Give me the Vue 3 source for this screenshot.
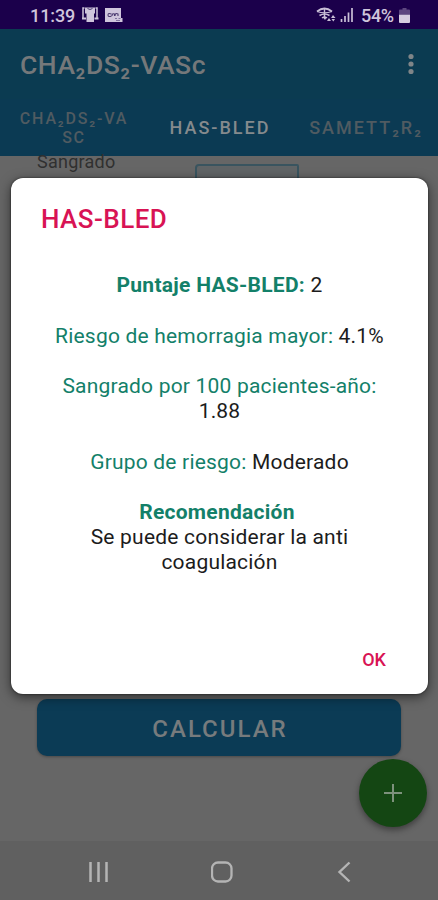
<script setup>
import {ref} from 'vue'

const title = 'CHA₂DS₂-VASc'
const tabs = [
  {id: 'chads', lines: ['CHA₂DS₂-VA', 'SC']},
  {id: 'hasbled', lines: ['HAS-BLED']},
  {id: 'samett', lines: ['SAMETT₂R₂']},
]
const activeTab = ref('hasbled')
const showDialog = ref(true)
</script>

<template>
  <div class='screen'>
    <header class='status'>
      <span class='clock'>11:39</span>
      <svg class='shirt' viewBox='0 0 18 16' width='18' height='16'>
        <path d='M3.500 1H2v10M14.500 1H16v10' fill='none' stroke='#cfc5dc' stroke-width='1.500' />
        <path d='M4 .5h10v6h-1V15H5.500V6.500H4z' fill='#cfc5dc' />
        <path d='M6.500 1.500q2.500 2 5 0' fill='none' stroke='#4b3a70' />
        <path d='M1 11.500h4M13.500 11.500h4' stroke='#cfc5dc' stroke-width='1.800' />
      </svg>
      <svg class='keyboard' viewBox='0 0 19 15' width='19' height='15'>
        <path d='M1 0h16v10h1.500v4H1z' fill='#cfc5dc' />
        <path d='M7.500 6Q4 4.500 4 7t3.500 1M8 8q0-3 2.500-2v2M11 8q0-3.500 3-2v2' fill='none' stroke='#4b3a70' stroke-width='1.100' />
        <path d='M11 10.500h2M14.500 10.500h2M12 12.500h4' stroke='#8275a0' />
      </svg>
      <span class='grow'></span>
      <svg class='wifi' viewBox='0 0 20 16' width='20' height='16'>
        <g fill='none' stroke='#c9bfd6' stroke-width='1.700'>
          <path d='M1 4.500Q8.500-1.500 16 4.500' />
          <path d='M1 4.500Q8.500 7 16 4.500' stroke-width='1.200' />
          <path d='M3.500 8.500q5-3 10 0' />
          <path d='M6 11q2.500-2 5 0M8.500 2v9' stroke-width='1.400' />
        </g>
        <path d='M7 10.500h3.500L9 13zM11 14l2-3 2 3zM15 11l2-3 2.500 3zM15.500 12h3.500l-1.700 2.500z' fill='#c9bfd6' />
      </svg>
      <svg class='signal' viewBox='0 0 14 14' width='14' height='14'>
        <path d='M1.500 14v-3M5 14V8M8.500 14V4.500M12 14V0' stroke='#c9bfd6' stroke-width='1.700' />
      </svg>
      <span class='percent'>54%</span>
      <svg class='battery' viewBox='0 0 11 15' width='11' height='15'>
        <path d='M3.500 0h4v1.500H10a1 1 0 0 1 1 1V6H0V2.500a1 1 0 0 1 1-1h2.500z' fill='#5d4780' />
        <path d='M0 6.500h11V14a1 1 0 0 1-1 1H1a1 1 0 0 1-1-1z' fill='#d6cee0' />
      </svg>
    </header>

    <div class='toolbar'>
      <h1>{{title}}</h1>
      <svg viewBox='0 0 6 22' width='6' height='22' fill='#7f8588'>
        <circle cx='3' cy='3.500' r='2.600' />
        <circle cx='3' cy='11' r='2.600' />
        <circle cx='3' cy='18.500' r='2.600' />
      </svg>
    </div>

    <nav class='tabs'>
      <button v-for='tab in tabs'
        :key='tab.id'
        :class='[tab.id, {active: tab.id === activeTab}]'
        @click='activeTab = tab.id'>
        <span v-for='line in tab.lines' :key='line'>{{line}}</span>
      </button>
    </nav>

    <main class='content'>
      <div class='field'>
        <span class='label'>Sangrado</span>
        <span class='answer'></span>
      </div>
      <button class='calculate' @click='showDialog = true'>CALCULAR</button>
    </main>

    <footer class='navbar'>
      <svg viewBox='0 0 22 22' width='22' height='22'>
        <path d='M2.500 1v20M10.500 1v20M18.500 1v20' stroke='#b4b4b4' stroke-width='2.500' />
      </svg>
      <svg viewBox='0 0 22 22' width='22' height='22'>
        <rect x='1' y='1.500' width='19.500' height='19' rx='6' fill='none' stroke='#b4b4b4' stroke-width='2.300' />
      </svg>
      <svg viewBox='0 0 22 22' width='22' height='22'>
        <path d='M15.500 1.500L5.500 11l10 9.500' fill='none' stroke='#b4b4b4' stroke-width='2.400' />
      </svg>
    </footer>

    <button class='fab'>
      <svg viewBox='0 0 18 18' width='18' height='18'>
        <path d='M9 0v18M0 9h18' stroke='#7d917c' stroke-width='2' />
      </svg>
    </button>

    <section v-if='showDialog' class='dialog'>
      <h2>HAS-BLED</h2>
      <div class='result'>
        <p><b>Puntaje HAS-BLED:</b> 2</p>
        <p><i>Riesgo de hemorragia mayor:</i> 4.1%</p>
        <p><i>Sangrado por 100 pacientes-año:</i><br>1.88</p>
        <p><i>Grupo de riesgo:</i> Moderado</p>
        <p><b class='heading'>Recomendación</b><br>Se puede considerar la anti<br>coagulación</p>
      </div>
      <button class='ok' @click='showDialog = false'>OK</button>
    </section>
  </div>
</template>

<style>
body {
  margin: 0;
  background: #666;
}
</style>

<style scoped>
* {
  margin: 0;
  padding: 0;
  box-sizing: border-box;
}

.screen {
  position: relative;
  width: 438px;
  height: 900px;
  display: flex;
  flex-direction: column;
  overflow: hidden;
  background: #666;
  font-family: Roboto, 'Liberation Sans', sans-serif;
}

button {
  border: none;
  background: none;
  font-family: inherit;
  cursor: pointer;
}

svg {
  display: block;
  flex: none;
}

.status {
  height: 29px;
  flex: none;
  display: flex;
  align-items: center;
  padding: 1px 28px 0 30px;
  background: #1b004b;
  color: #cfc5dc;
  font-size: 18px;
  font-weight: 500;
}

.clock {
  width: 45px;
  letter-spacing: -0.1px;
}

.shirt {
  margin-left: 6px;
}

.keyboard {
  margin-left: 5px;
}

.grow {
  flex: 1;
}

.signal {
  margin-left: 4px;
}

.percent {
  width: 33px;
  margin-left: 7px;
  letter-spacing: -0.3px;
}

.battery {
  margin-left: 5px;
}

.toolbar {
  height: 70px;
  flex: none;
  display: flex;
  align-items: center;
  justify-content: space-between;
  padding: 0 24px 0 20px;
  background: #0b3b51;
}

h1 {
  padding-top: 1px;
  color: #75787a;
  font-size: 26.5px;
  font-weight: 500;
  letter-spacing: 0.55px;
  white-space: nowrap;
}

.tabs {
  height: 57px;
  flex: none;
  display: flex;
  background: #0b3a53;
}

.tabs button {
  width: 146px;
  flex: none;
  display: flex;
  flex-direction: column;
  align-items: center;
  justify-content: center;
  padding-left: 2px;
  color: #505b61;
  font-size: 18px;
  line-height: 19px;
  font-weight: 500;
  letter-spacing: 2px;
  white-space: nowrap;
}

.tabs .active {
  color: #858a8d;
}

.tabs .chads {
  font-size: 16px;
  letter-spacing: 1.8px;
}

.content {
  flex: 1;
  display: flex;
  flex-direction: column;
  justify-content: space-between;
  padding: 0 37px 85px;
}

.field {
  display: flex;
  justify-content: space-between;
  padding-right: 102px;
}

.label {
  margin-top: -5px;
  color: #303030;
  font-size: 18px;
  line-height: 22px;
  letter-spacing: 0.25px;
}

.answer {
  width: 104px;
  height: 40px;
  margin-top: 8px;
  border: 2px solid #39545f;
  border-radius: 4px 2px 2px 2px;
  background: #606466;
}

.calculate {
  height: 57px;
  padding: 2px 0 0 2px;
  border-radius: 10px;
  background: #0b3b55;
  box-shadow: 0 1px 3px rgba(0, 0, 0, 0.3);
  color: #777b7d;
  font-size: 24px;
  font-weight: 500;
  letter-spacing: 2px;
}

.navbar {
  height: 59px;
  flex: none;
  display: flex;
  align-items: center;
  justify-content: space-between;
  padding: 2px 82px 0 88px;
  background: #606060;
}

.fab {
  position: absolute;
  right: 11px;
  bottom: 73px;
  width: 68px;
  height: 68px;
  display: grid;
  place-items: center;
  border-radius: 50%;
  background: #144613;
  box-shadow: 0 3px 6px rgba(0, 0, 0, 0.4);
}

.dialog {
  position: absolute;
  top: 178px;
  left: 11px;
  width: 417px;
  height: 516px;
  display: flex;
  flex-direction: column;
  padding: 25px 30px 19px;
  border-radius: 12px;
  background: #fff;
  box-shadow: 0 3px 12px rgba(0, 0, 0, 0.55), 0 0 2px rgba(0, 0, 0, 0.7);
}

h2 {
  color: #d81354;
  font-size: 26px;
  line-height: 32px;
  font-weight: 500;
  letter-spacing: 0.45px;
}

.result {
  flex: 1;
  margin-top: 38.2px;
  color: #1c1c1c;
  font-size: 21px;
  line-height: 25.2px;
  letter-spacing: 0.2px;
  text-align: center;
  white-space: nowrap;
}

.result p {
  margin-bottom: 25.2px;
}

.result b,
.result i {
  color: #138069;
  font-style: normal;
}

.result b {
  font-weight: 700;
  letter-spacing: 0.27px;
}

.result .heading {
  padding-right: 5px;
}

.ok {
  align-self: flex-end;
  padding: 0 12px;
  color: #d81354;
  font-size: 18px;
  line-height: 30px;
  font-weight: 500;
}
</style>
